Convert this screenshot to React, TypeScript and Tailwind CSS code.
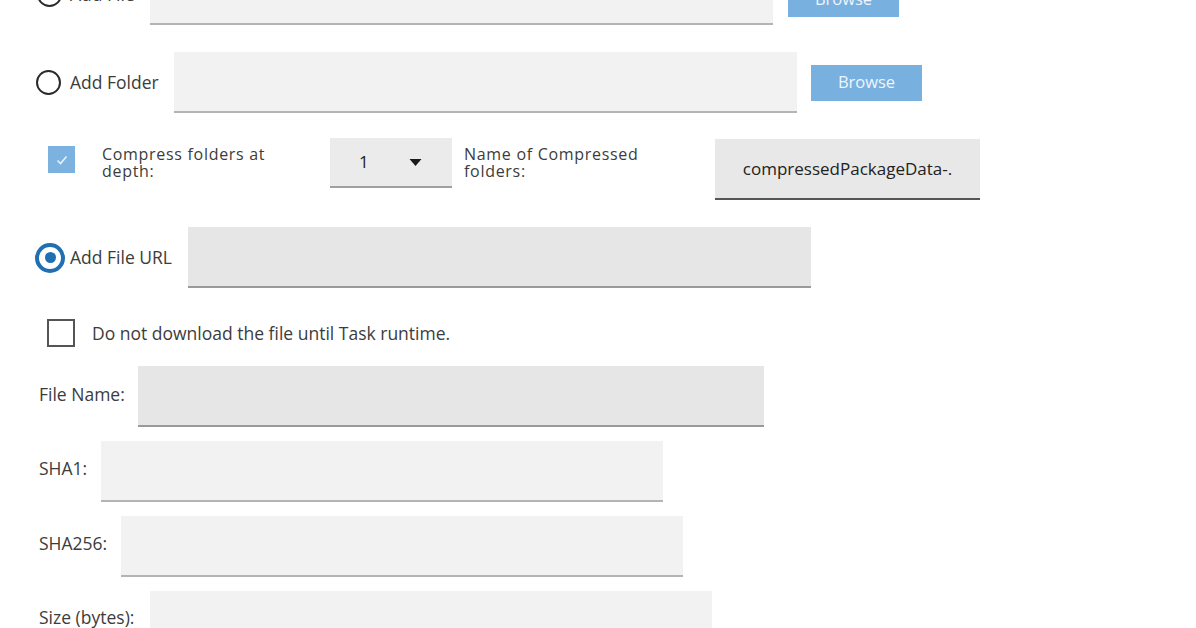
import type { ReactNode } from 'react';

const font = { fontFamily: '"Open Sans", "Noto Sans", Arial, sans-serif' };

function Radio({ checked, className }: { checked?: boolean; className?: string }) {
  if (checked) {
    return (
      <span
        className={`flex size-[30px] shrink-0 items-center justify-center rounded-full border-[4px] border-[#1f6fb2] bg-white ${className ?? ''}`}
      >
        <span className="size-[11px] rounded-full bg-[#1f6fb2]" />
      </span>
    );
  }
  return (
    <span
      className={`block size-[25px] shrink-0 rounded-full border-[2.5px] border-[#2b2b2b] bg-white ${className ?? ''}`}
    />
  );
}

function Field({
  width,
  tone = 'light',
  children,
}: {
  width: string;
  tone?: 'light' | 'dark';
  children?: ReactNode;
}) {
  return (
    <div
      className={`${width} h-[61px] shrink-0 border-b-[2px] ${
        tone === 'dark'
          ? 'border-[#9a9a9a] bg-[#e6e6e6]'
          : 'border-[#b4b4b4] bg-[#f2f2f2]'
      }`}
    >
      {children}
    </div>
  );
}

function BrowseButton({ className }: { className?: string }) {
  return (
    <button
      className={`flex w-[111px] shrink-0 items-center justify-center bg-[#78b1df] text-[16.5px] text-[#eef5fc] ${className ?? 'h-[36px]'}`}
    >
      Browse
    </button>
  );
}

export default function App() {
  return (
    <div className="h-[628px] w-[1196px] overflow-hidden bg-white text-[17.5px] text-[#3c3c3c]" style={font}>
      {/* Add File (scrolled off the top) */}
      <div className="-mt-[36px] flex h-[61px] items-center">
        <div className="flex w-[150px] items-center">
          <Radio className="ml-[37px]" />
          <span className="ml-[8px]">Add File</span>
        </div>
        <Field width="w-[623px]" />
        <div className="ml-[15px] mt-[2px]">
          <BrowseButton className="h-[42px] pt-[8px]" />
        </div>
      </div>

      {/* Add Folder */}
      <div className="mt-[27px] flex h-[61px] items-center">
        <div className="flex w-[174px] items-center">
          <Radio className="ml-[36px]" />
          <span className="ml-[9px]">Add Folder</span>
        </div>
        <Field width="w-[623px]" />
        <div className="ml-[14px]">
          <BrowseButton />
        </div>
      </div>

      {/* Compress folders */}
      <div className="mt-[25px] flex h-[62px] items-start">
        <span className="ml-[48px] mt-[8px] flex size-[27px] shrink-0 items-center justify-center bg-[#7cb2e0]">
          <svg viewBox="0 0 16 16" className="size-[16px]" fill="none" stroke="#e8f2fb" strokeWidth="1.6">
            <path d="M3.5 8.5l3 3 6-7" />
          </svg>
        </span>
        <span className="ml-[27px] mt-[8px] w-[228px] shrink-0 text-[16px] leading-[17px] tracking-[0.7px]">
          Compress folders at
          <br />
          depth:
        </span>
        <div className="flex h-[50px] w-[122px] shrink-0 items-center border-b-[2px] border-[#a0a0a0] bg-[#ebebeb]">
          <span className="ml-[29px] text-[17px] text-[#222]">1</span>
          <svg viewBox="0 0 12 7" className="ml-[40px] h-[7px] w-[13px]">
            <path d="M0 0h12L6 7z" fill="#1a1a1a" />
          </svg>
        </div>
        <span className="ml-[12px] mt-[8px] w-[251px] shrink-0 text-[16px] leading-[17px] tracking-[0.7px]">
          Name of Compressed
          <br />
          folders:
        </span>
        <div className="mt-[1px] flex h-[61px] w-[265px] shrink-0 items-center justify-center border-b-[2px] border-[#555] bg-[#e8e8e8] text-[17px] font-medium text-[#222]">
          compressedPackageData-.
        </div>
      </div>

      {/* Add File URL */}
      <div className="mt-[27px] flex h-[61px] items-center">
        <div className="flex w-[188px] items-center">
          <Radio checked className="ml-[35px]" />
          <span className="ml-[5px]">Add File URL</span>
        </div>
        <Field width="w-[623px]" tone="dark" />
      </div>

      {/* Defer download */}
      <div className="mt-[31px] flex h-[28px] items-center">
        <span className="ml-[47px] block size-[28px] shrink-0 border-[2px] border-[#555] bg-white" />
        <span className="ml-[17px]">Do not download the file until Task runtime.</span>
      </div>

      {/* File Name */}
      <div className="mt-[19px] flex h-[61px] items-center">
        <span className="mb-[4px] ml-[39px] w-[99px] shrink-0">File Name:</span>
        <Field width="w-[626px]" tone="dark" />
      </div>

      {/* SHA1 */}
      <div className="mt-[14px] flex h-[61px] items-center">
        <span className="mb-[6px] ml-[39px] w-[62px] shrink-0">SHA1:</span>
        <Field width="w-[562px]" />
      </div>

      {/* SHA256 */}
      <div className="mt-[14px] flex h-[61px] items-center">
        <span className="mb-[6px] ml-[39px] w-[82px] shrink-0">SHA256:</span>
        <Field width="w-[562px]" />
      </div>

      {/* Size */}
      <div className="mt-[14px] flex h-[61px] items-center">
        <span className="mb-[8px] ml-[39px] w-[111px] shrink-0">Size (bytes):</span>
        <Field width="w-[562px]" />
      </div>
    </div>
  );
}
